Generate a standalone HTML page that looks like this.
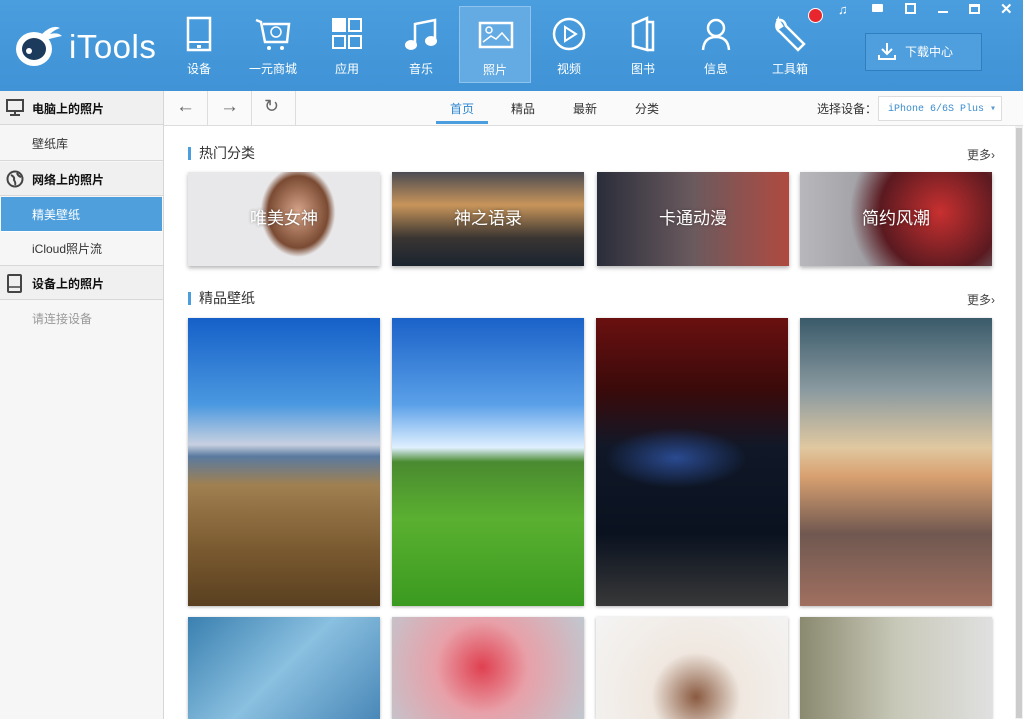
<!DOCTYPE html><html><head><meta charset="utf-8"><style>
*{margin:0;padding:0;box-sizing:border-box}
body{width:1023px;height:719px;overflow:hidden;font-family:"Liberation Sans","Noto Sans CJK SC",sans-serif;background:#fff;position:relative;font-size:12px}
.hdr{position:absolute;left:0;top:0;width:1023px;height:91px;background:linear-gradient(180deg,#4a9ede,#3f93d6);}
.nav{position:absolute;top:6px;width:72px;height:77px;color:#fff;text-align:center;font-size:12px}
.nav .lbl{position:absolute;top:54px;left:0;width:100%}
.nav svg{position:absolute;left:18px;top:10px}
.sel{background:#64abe3;border:1px solid #8ec3ec}
.side{position:absolute;left:0;top:91px;width:164px;height:628px;background:#f6f6f6;border-right:1px solid #d6d6d6}
.sh{position:absolute;left:0;width:163px;height:34px;background:#f0f0f0;border-bottom:1px solid #d8d8d8;font-weight:bold;font-size:12px;color:#111;padding:9px 0 0 32px}
.si{position:absolute;left:0;width:163px;height:35px;border-bottom:1px solid #d8d8d8;padding:9px 0 0 32px;color:#333}
.tb{position:absolute;left:164px;top:91px;width:859px;height:35px;background:#fafafa;border-bottom:1px solid #ddd}
.tbb{position:absolute;top:0;width:44px;height:34px;border-right:1px solid #ddd}
.tab{position:absolute;top:9px;color:#333}
.sec{position:absolute;left:188px;font-size:14px;color:#333;padding-left:8px;border-left:3px solid #4a9ede;line-height:13px}
.more{position:absolute;left:967px;font-size:12px;color:#444}
.cat{position:absolute;top:172px;width:192px;height:94px;color:#fff;font-size:17px;text-align:center;line-height:94px;box-shadow:0 2px 4px rgba(0,0,0,.3);text-shadow:0 0 3px rgba(0,0,0,.4)}
.wp{position:absolute;width:192px;box-shadow:0 1px 3px rgba(0,0,0,.3)}
</style></head><body>
<div class="hdr"></div>
<svg style="position:absolute;left:12px;top:22px" width="52" height="48"><ellipse cx="22" cy="27" rx="18" ry="17" fill="#fff"/><ellipse cx="22" cy="27" rx="12" ry="11" fill="#1b3a5c"/><circle cx="17" cy="29" r="3" fill="#fff"/><path d="M30 12 Q40 2 48 6 Q42 8 38 12 Q46 10 50 14 Q40 16 34 18Z" fill="#fff"/></svg>
<div style="position:absolute;left:69px;top:28px;color:#fff;font-size:33px;letter-spacing:0.5px">iTools</div>
<div class="nav" style="left:163px"><svg width="36" height="36"><rect x="7" y="2" width="22" height="32" fill="none" stroke="#fff" stroke-width="2.5"/><line x1="7" y1="26" x2="29" y2="26" stroke="#fff" stroke-width="2"/><rect x="16" y="29" width="4" height="3" fill="#fff"/></svg><div class="lbl">设备</div></div>
<div class="nav" style="left:237px"><svg width="36" height="36"><path d="M1 4 L6 6 L10 26 L32 26 L34 8 L8 8" fill="none" stroke="#fff" stroke-width="2.5"/><circle cx="21" cy="16" r="5" fill="none" stroke="#fff" stroke-width="1.5"/><circle cx="14" cy="32" r="2" fill="#fff"/><circle cx="27" cy="32" r="2" fill="#fff"/></svg><div class="lbl">一元商城</div></div>
<div class="nav" style="left:311px"><svg width="36" height="36"><rect x="3" y="2" width="14" height="14" fill="#fff"/><rect x="20" y="3" width="12" height="12" fill="none" stroke="#fff" stroke-width="2"/><rect x="4" y="20" width="12" height="12" fill="none" stroke="#fff" stroke-width="2"/><rect x="20" y="20" width="12" height="12" fill="none" stroke="#fff" stroke-width="2"/></svg><div class="lbl">应用</div></div>
<div class="nav" style="left:385px"><svg width="36" height="36"><path d="M12 28 V8 L32 4 V24" fill="none" stroke="#fff" stroke-width="2.5"/><ellipse cx="8" cy="29" rx="6" ry="5" fill="#fff"/><ellipse cx="28" cy="25" rx="6" ry="5" fill="#fff"/></svg><div class="lbl">音乐</div></div>
<div class="nav sel" style="left:459px"><svg width="36" height="36"><rect x="2" y="6" width="32" height="24" fill="none" stroke="#fff" stroke-width="2.5"/><circle cx="11" cy="13" r="3" fill="none" stroke="#fff" stroke-width="1.5"/><path d="M5 25 L13 19 L18 22 L24 16 L31 24" fill="none" stroke="#fff" stroke-width="1.5"/></svg><div class="lbl">照片</div></div>
<div class="nav" style="left:533px"><svg width="36" height="36"><circle cx="18" cy="18" r="15" fill="none" stroke="#fff" stroke-width="2.5"/><path d="M14 11 L25 18 L14 25Z" fill="none" stroke="#fff" stroke-width="2"/></svg><div class="lbl">视频</div></div>
<div class="nav" style="left:607px"><svg width="36" height="36"><path d="M8 8 L22 2 V34 L8 30Z M22 6 H28 V34 H22" fill="none" stroke="#fff" stroke-width="2.5"/></svg><div class="lbl">图书</div></div>
<div class="nav" style="left:680px"><svg width="36" height="36"><circle cx="18" cy="12" r="8" fill="none" stroke="#fff" stroke-width="2.5"/><path d="M5 34 Q6 21 18 21 Q30 21 31 34" fill="none" stroke="#fff" stroke-width="2.5"/></svg><div class="lbl">信息</div></div>
<div class="nav" style="left:754px"><svg width="36" height="36"><path d="M6 4 Q2 12 8 16 L26 34 L32 28 L14 10 Q12 3 6 4 L10 10 L7 12Z" fill="none" stroke="#fff" stroke-width="2.5"/></svg><div class="lbl">工具箱</div></div>
<div style="position:absolute;left:808px;top:8px;width:15px;height:15px;border-radius:50%;background:#e8262d;border:1px solid #fff"></div>
<div style="position:absolute;left:838px;top:2px;color:#fff;font-size:13px">♫</div>
<div style="position:absolute;left:872px;top:4px;width:11px;height:8px;background:#fff;border-radius:1px"></div>
<div style="position:absolute;left:905px;top:3px;width:11px;height:11px;border:2px solid #fff"></div>
<div style="position:absolute;left:938px;top:11px;width:10px;height:2px;background:#fff"></div>
<div style="position:absolute;left:969px;top:4px;width:11px;height:10px;border:2px solid #fff;border-top-width:3px"></div>
<div style="position:absolute;left:1000px;top:0px;color:#fff;font-size:15px;font-weight:bold">✕</div>
<div style="position:absolute;left:865px;top:33px;width:117px;height:38px;background:#4f9fde;border:1px solid #2f7fc0;color:#fff;padding:9px 0 0 39px">下载中心</div>
<svg style="position:absolute;left:877px;top:41px" width="20" height="20"><path d="M10 2 V13 M5 8 L10 13 L15 8 M2 14 V18 H18 V14" fill="none" stroke="#fff" stroke-width="2"/></svg>

<div class="side">
<div class="sh" style="top:0">电脑上的照片</div>
<div class="si" style="top:35px">壁纸库</div>
<div class="sh" style="top:71px">网络上的照片</div>
<div class="si" style="top:106px;background:#4f9fdc;color:#fff;border-color:#fff;left:1px;width:161px;padding-left:31px">精美壁纸</div>
<div class="si" style="top:140px">iCloud照片流</div>
<div class="sh" style="top:175px">设备上的照片</div>
<div class="si" style="top:210px;color:#999;border:none">请连接设备</div>
<svg style="position:absolute;left:6px;top:8px" width="18" height="18"><rect x="1" y="1" width="16" height="11" fill="none" stroke="#444" stroke-width="2"/><path d="M9 12 V16 M4 16 H14" stroke="#444" stroke-width="2"/></svg>
<svg style="position:absolute;left:6px;top:79px" width="18" height="18"><circle cx="9" cy="9" r="7.5" fill="none" stroke="#444" stroke-width="2"/><path d="M5 5 Q9 7 8 10 Q10 13 9 15 M11 3 Q12 6 15 7" fill="none" stroke="#444" stroke-width="2"/></svg>
<svg style="position:absolute;left:7px;top:183px" width="16" height="20"><rect x="1" y="1" width="13" height="17" rx="1" fill="none" stroke="#444" stroke-width="2"/><line x1="1" y1="13" x2="14" y2="13" stroke="#444" stroke-width="1.5"/></svg>
</div>

<div class="tb">
<div class="tbb" style="left:0"></div><div class="tbb" style="left:44px"></div><div class="tbb" style="left:88px"></div>
<div style="position:absolute;left:12px;top:5px;font-size:19px;color:#666">←</div>
<div style="position:absolute;left:56px;top:5px;font-size:19px;color:#666">→</div>
<div style="position:absolute;left:100px;top:5px;font-size:18px;color:#666">↻</div>
<div class="tab" style="left:286px;color:#2f86d0">首页</div>
<div style="position:absolute;left:272px;top:30px;width:52px;height:3px;background:#4a9ede"></div>
<div class="tab" style="left:347px">精品</div>
<div class="tab" style="left:409px">最新</div>
<div class="tab" style="left:471px">分类</div>
<div class="tab" style="left:653px">选择设备：</div>
<div style="position:absolute;left:714px;top:5px;width:124px;height:25px;border:1px solid #ddd;background:#fff;font-family:'Liberation Mono',monospace;font-size:10px;color:#3a8ccc;padding:6px 0 0 9px;white-space:nowrap;overflow:hidden">iPhone 6/6S Plus <span style="color:#5a9ad0">▾</span></div>
</div>
<div style="position:absolute;left:1015px;top:126px;width:8px;height:593px;background:#f0f0f0"><div style="margin:2px 1px;height:590px;background:#ccc"></div></div>

<div class="sec" style="top:147px">热门分类</div><div class="more" style="top:146px">更多›</div>
<div class="cat" style="left:188px;background:radial-gradient(ellipse 50px 60px at 110px 40px,#d7a58a,#7a4a32 60%,transparent 75%),#e8e8ea">唯美女神</div>
<div class="cat" style="left:392px;background:linear-gradient(180deg,#4a4a52,#c8955a 35%,#3a3532 70%,#1a2430)">神之语录</div>
<div class="cat" style="left:597px;background:linear-gradient(90deg,#2a2d3a,#6a5a5e 50%,#b04a40)">卡通动漫</div>
<div class="cat" style="left:800px;background:radial-gradient(circle at 140px 40px,#c83030,#5a1a20 40%,transparent 60%),linear-gradient(90deg,#b8b8bc,#707078)">简约风潮</div>

<div class="sec" style="top:292px">精品壁纸</div><div class="more" style="top:291px">更多›</div>
<div class="wp" style="left:188px;top:318px;height:288px;background:linear-gradient(180deg,#1560c8,#4a98e0 30%,#c8d0e0 44%,#5a7aa0 48%,#a08050 58%,#7a5a30 80%,#5a4020)"></div>
<div class="wp" style="left:392px;top:318px;height:288px;background:linear-gradient(180deg,#1a62c8,#5aa0e8 30%,#e0f0ff 45%,#4a8a30 50%,#5ab030 70%,#3a9a20)"></div>
<div class="wp" style="left:596px;top:318px;height:288px;background:radial-gradient(ellipse 70px 30px at 80px 140px,#2a4a90,transparent),linear-gradient(180deg,#6a1010,#3a0a0a 25%,#101828 45%,#0a1220 75%,#383838)"></div>
<div class="wp" style="left:800px;top:318px;height:288px;background:linear-gradient(180deg,#3a5a6a,#8a9aa0 25%,#e0c8a0 45%,#d8a070 55%,#705850 75%,#a07060)"></div>
<div class="wp" style="left:188px;top:617px;height:102px;background:linear-gradient(135deg,#3a80b0,#8ac0e0,#4a88b8)"></div>
<div class="wp" style="left:392px;top:617px;height:102px;background:radial-gradient(circle at 90px 50px,#e04050,#e8a0a8 40%,#c0c8d0)"></div>
<div class="wp" style="left:596px;top:617px;height:102px;background:radial-gradient(circle at 100px 80px,#8a5a40,#f0e8e0 35%,#f4f4f4)"></div>
<div class="wp" style="left:800px;top:617px;height:102px;background:linear-gradient(90deg,#8a8a70,#c8c8b8,#e0e0e0)"></div>
</body></html>
